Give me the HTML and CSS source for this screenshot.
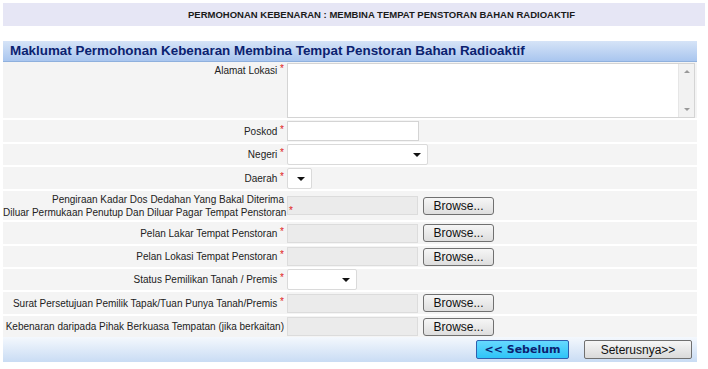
FILE: index.html
```html
<!DOCTYPE html>
<html lang="ms">
<head>
  <meta charset="UTF-8" />
  <title>Permohonan Kebenaran</title>
  <link rel="stylesheet" href="styles.css">
</head>
<body>

  <div class="page-title">PERMOHONAN KEBENARAN : MEMBINA TEMPAT PENSTORAN BAHAN RADIOAKTIF</div>

  <div class="panel">
    <div class="panel-head">Maklumat Permohonan Kebenaran Membina Tempat Penstoran Bahan Radioaktif</div>

    <div class="form">
      <div class="row row-tall">
        <div class="label">Alamat Lokasi <span class="req">*</span></div>
        <div class="field">
          <div class="textarea"><div class="scroll"><span class="up"></span><span class="down"></span></div></div>
        </div>
      </div>

      <div class="row row-mid">
        <div class="label">Poskod <span class="req">*</span></div>
        <div class="field"><div class="text poskod"></div></div>
      </div>

      <div class="row">
        <div class="label">Negeri <span class="req">*</span></div>
        <div class="field"><div class="select negeri"></div></div>
      </div>

      <div class="row row-mid">
        <div class="label">Daerah <span class="req">*</span></div>
        <div class="field"><div class="select daerah"></div></div>
      </div>

      <div class="row row-two">
        <div class="label">Pengiraan Kadar Dos Dedahan Yang Bakal Diterima<br>Diluar Permukaan Penutup Dan Diluar Pagar Tempat Penstoran <span class="req">*</span></div>
        <div class="field"><div class="file"></div><button class="browse">Browse...</button></div>
      </div>

      <div class="row row-mid">
        <div class="label">Pelan Lakar Tempat Penstoran <span class="req">*</span></div>
        <div class="field"><div class="file"></div><button class="browse">Browse...</button></div>
      </div>

      <div class="row">
        <div class="label">Pelan Lokasi Tempat Penstoran <span class="req">*</span></div>
        <div class="field"><div class="file"></div><button class="browse">Browse...</button></div>
      </div>

      <div class="row">
        <div class="label">Status Pemilikan Tanah / Premis <span class="req">*</span></div>
        <div class="field"><div class="select status"></div></div>
      </div>

      <div class="row row-mid">
        <div class="label">Surat Persetujuan Pemilik Tapak/Tuan Punya Tanah/Premis <span class="req">*</span></div>
        <div class="field"><div class="file"></div><button class="browse">Browse...</button></div>
      </div>

      <div class="row">
        <div class="label">Kebenaran daripada Pihak Berkuasa Tempatan (jika berkaitan)</div>
        <div class="field"><div class="file"></div><button class="browse">Browse...</button></div>
      </div>
    </div>

    <div class="panel-foot">
      <button class="btn-back">&lt;&lt; Sebelum</button>
      <button class="btn-next">Seterusnya&gt;&gt;</button>
    </div>
  </div>

</body>
</html>
```

FILE: styles.css
```css
body {
  margin: 3px;
  font-family: "Liberation Sans", Arial, sans-serif;
  font-size: 10px;
  color: #222;
  background: #fff;
}

.page-title {
  height: 23px;
  line-height: 24px;
  background: #e6e6f5;
  text-align: center;
  font-weight: bold;
  font-size: 9.5px;
  color: #1a1a1a;
  padding-left: 55px;
}

.panel {
  width: 694px;
  margin-top: 15px;
}

.panel-head {
  height: 20px;
  line-height: 20px;
  padding-left: 7px;
  font-size: 13.4px;
  font-weight: bold;
  color: #0b2270;
  background: linear-gradient(#d6e4f7, #a9c6ef);
  border-bottom: 1px solid #8fb0dd;
}

.form {
  display: flex;
  flex-direction: column;
}

.row {
  display: grid;
  grid-template-columns: 284px 1fr;
  height: 21px;
  background: #f4f4f4;
  border-top: 2px solid #fff;
}

.row:first-child {
  border-top: 0;
}

.row-mid { height: 22px; }
.row-tall { height: 56px; }
.row-two { height: 29px; }

.label {
  align-self: center;
  text-align: right;
  padding-right: 3px;
  line-height: 13px;
  white-space: nowrap;
}

.row-tall .label {
  align-self: start;
  padding-top: 2px;
}

.req {
  color: #e02020;
  font-size: 10px;
  vertical-align: top;
  position: relative;
  top: -2px;
}

.field {
  display: flex;
  align-items: center;
  gap: 5px;
}

.textarea {
  position: relative;
  width: 406px;
  height: 53px;
  background: #fff;
  border: 1px solid #d4d4d4;
}

.scroll {
  position: absolute;
  top: 0;
  right: 0;
  width: 15px;
  height: 100%;
  background: #f2f2f2;
  border-left: 1px solid #e6e6e6;
}

.up,
.down {
  position: absolute;
  left: 5px;
  width: 0;
  height: 0;
  border-left: 3px solid transparent;
  border-right: 3px solid transparent;
}

.up {
  top: 6px;
  border-bottom: 3px solid #999;
}

.down {
  bottom: 6px;
  border-top: 3px solid #999;
}

.text {
  height: 18px;
  background: #fff;
  border: 1px solid #d4d4d4;
}

.poskod {
  width: 130px;
}

.select {
  position: relative;
  height: 19px;
  background: #fff;
  border: 1px solid #dadada;
  border-radius: 2px;
}

.select::after {
  content: "";
  position: absolute;
  right: 6px;
  top: 8px;
  border-left: 4px solid transparent;
  border-right: 4px solid transparent;
  border-top: 4px solid #111;
}

.negeri { width: 139px; }
.daerah { width: 23px; }
.status { width: 68px; }

.file {
  width: 129px;
  height: 17px;
  background: #ebebeb;
  border: 1px solid #dcdcdc;
}

.browse {
  width: 71px;
  height: 18px;
  padding: 0;
  font-family: "Liberation Sans", Arial, sans-serif;
  font-size: 12px;
  color: #111;
  background: linear-gradient(#f6f6f6, #dedede);
  border: 1px solid #707070;
  border-radius: 3px;
}

.panel-foot {
  display: flex;
  justify-content: flex-end;
  align-items: center;
  gap: 15px;
  height: 25px;
  padding-right: 5px;
  background: linear-gradient(#f4f8fd, #c9dcf4);
}

.btn-back {
  width: 93px;
  height: 19px;
  padding: 0 0 1px;
  font-family: "DejaVu Sans", Verdana, sans-serif;
  font-size: 11px;
  font-weight: bold;
  color: #0b2270;
  background: linear-gradient(#66d9ff, #2ec4f7);
  border: 1px solid #2f5fae;
  border-radius: 2px;
}

.btn-next {
  width: 108px;
  height: 19px;
  padding: 0;
  font-family: "Liberation Sans", Arial, sans-serif;
  font-size: 12px;
  color: #111;
  background: linear-gradient(#f6f6f6, #dadada);
  border: 1px solid #707070;
  border-radius: 2px;
}
```
